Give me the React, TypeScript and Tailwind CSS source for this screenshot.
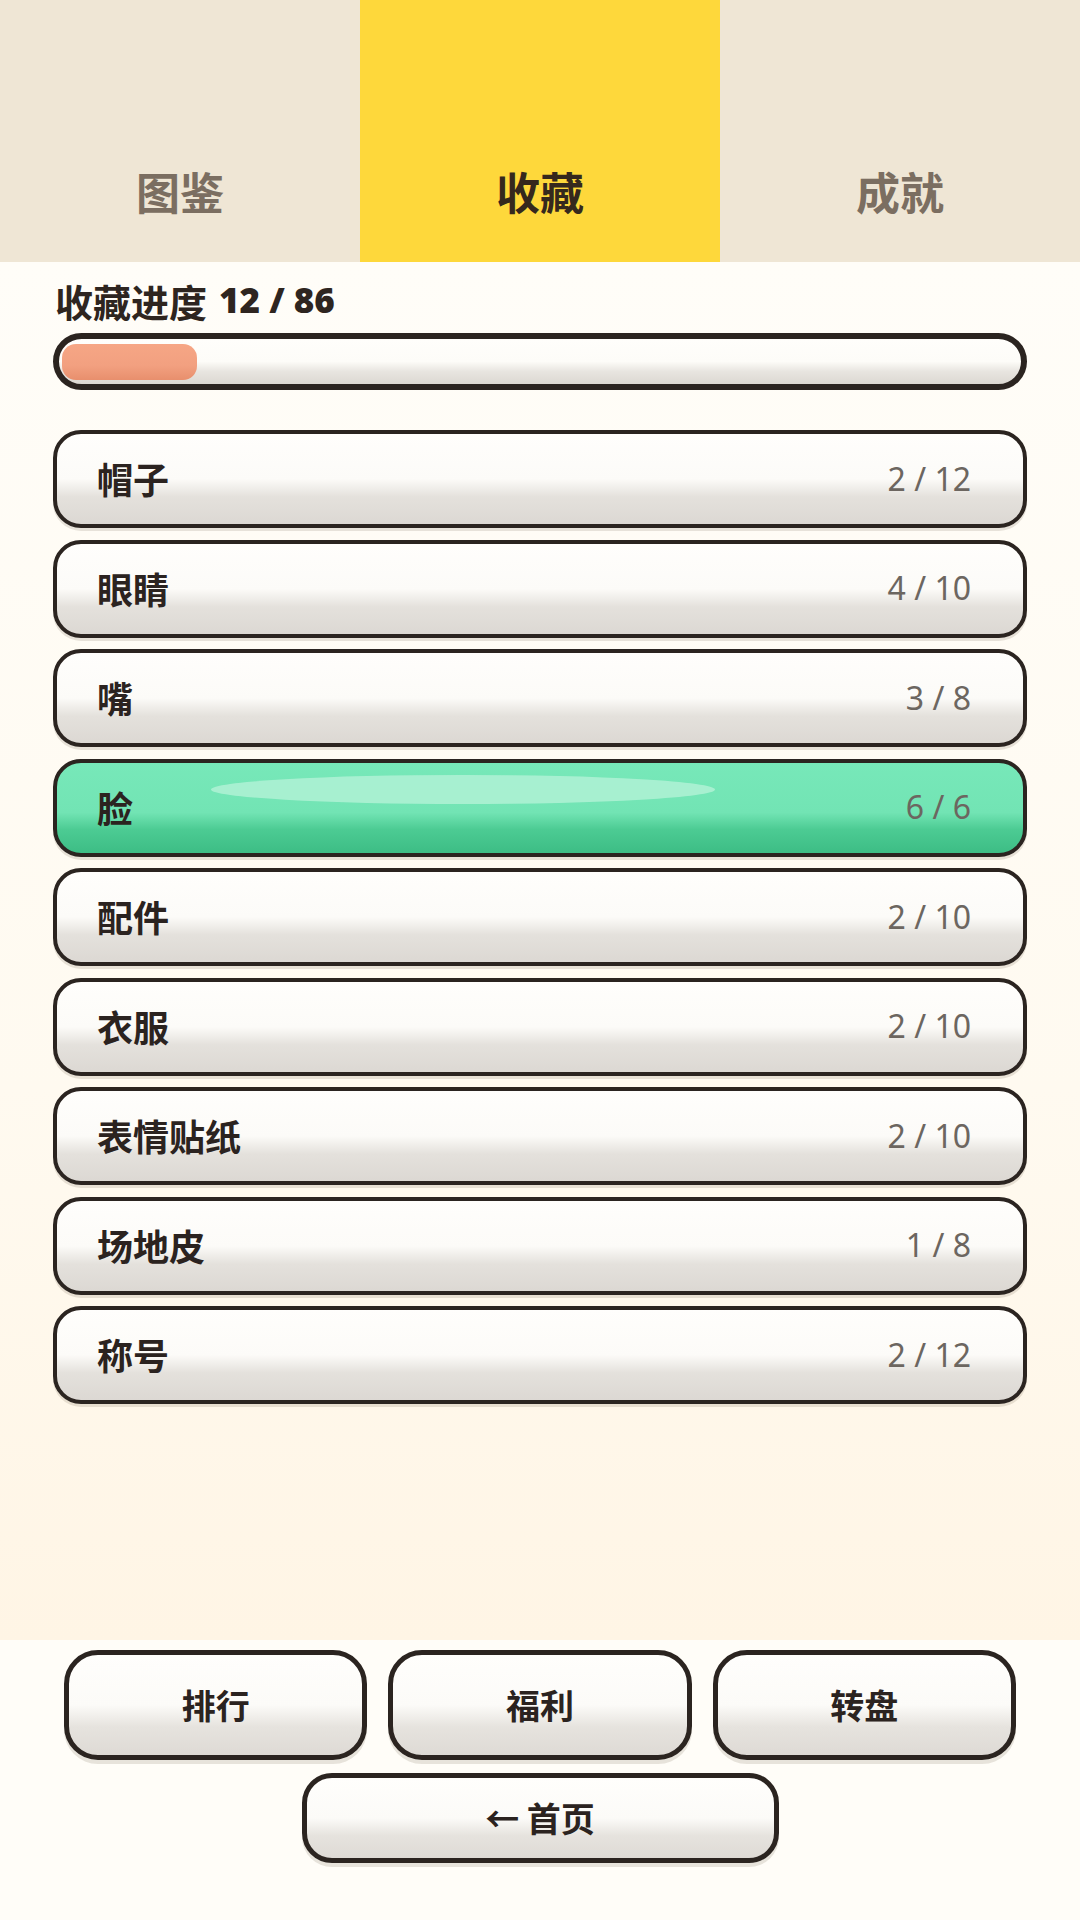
import React from "react";

const cjk = { fontFamily: '"Noto Sans CJK SC", "Noto Sans", sans-serif' };
const num = { fontFamily: '"Noto Sans", "Liberation Sans", sans-serif' };

const rows: { name: string; count: string; done?: boolean }[] = [
  { name: "帽子", count: "2 / 12" },
  { name: "眼睛", count: "4 / 10" },
  { name: "嘴", count: "3 / 8" },
  { name: "脸", count: "6 / 6", done: true },
  { name: "配件", count: "2 / 10" },
  { name: "衣服", count: "2 / 10" },
  { name: "表情贴纸", count: "2 / 10" },
  { name: "场地皮", count: "1 / 8" },
  { name: "称号", count: "2 / 12" },
];

export default function App() {
  return (
    <div className="w-[1080px] h-[1920px] flex flex-col overflow-hidden" style={cjk}>
      {/* Tabs */}
      <div className="grid grid-cols-3 h-[262px] shrink-0">
        <div className="bg-[#efe6d5] flex items-end justify-center pb-[49px]">
          <span className="text-[44px] leading-[44px] font-bold text-[#7b6e61]">图鉴</span>
        </div>
        <div className="bg-[#fed83b] flex items-end justify-center pb-[49px]">
          <span className="text-[44px] leading-[44px] font-bold text-[#35281d]">收藏</span>
        </div>
        <div className="bg-[#efe6d5] flex items-end justify-center pb-[49px]">
          <span className="text-[44px] leading-[44px] font-bold text-[#7b6e61]">成就</span>
        </div>
      </div>

      {/* Content */}
      <div className="flex-1 flex flex-col px-[53px] pt-[16px] bg-[linear-gradient(180deg,#fffdf8_0%,#fffaf0_60%,#fff5e5_100%)]">
        <div className="flex items-center h-[44px] text-[38px] font-bold text-[#2e2520] pl-[2px]">
          <span>收藏进度</span>
          <span className="ml-[12px] font-black text-[35px] tracking-[0px]" style={num}>12 / 86</span>
        </div>

        <div className="mt-[11px] h-[57px] rounded-full border-[6px] border-[#2b2420] bg-[linear-gradient(180deg,#fffefb_0%,#fdfcf8_50%,#e8e5e0_72%,#dcd8d2_100%)] flex items-center px-[3px]">
          <div className="h-[36px] w-[135px] rounded-[14px] bg-[linear-gradient(180deg,#f6a685_0%,#f2a080_60%,#e88f6d_100%)]" />
        </div>

        <div className="mt-[40px] flex flex-col gap-[11.5px]">
          {rows.map((r) => (
            <div
              key={r.name}
              className={
                r.done
                  ? "relative h-[98px] rounded-[28px] border-4 border-[#2b2420] flex items-center justify-between pl-[40px] pr-[52px] shadow-[0_3px_0_rgba(60,40,20,0.12)] bg-[linear-gradient(180deg,#77e8b9_0%,#72e4b4_55%,#4ccb93_74%,#3dbd85_100%)]"
                  : "relative h-[98px] rounded-[28px] border-4 border-[#2b2420] flex items-center justify-between pl-[40px] pr-[52px] shadow-[0_3px_0_rgba(60,40,20,0.12)] bg-[linear-gradient(180deg,#fffefc_0%,#fcfbf8_50%,#e4e1dc_70%,#dcd8d3_100%)]"
              }
            >
              {r.done && (
                <div className="absolute left-[154px] top-[12px] w-[504px] h-[29px] rounded-[50%] bg-[#b4f3d7] opacity-80" />
              )}
              <span className="relative text-[36px] leading-[40px] font-bold text-[#2b2320] -mt-[2px]">{r.name}</span>
              <span className="relative text-[32px] leading-[40px] text-[#6c6660] -mt-[1px]" style={num}>{r.count}</span>
            </div>
          ))}
        </div>
      </div>

      {/* Footer */}
      <div className="h-[280px] shrink-0 bg-[#fffdf8] flex flex-col items-center pt-[10px]">
        <div className="grid grid-cols-3 gap-[21px] w-[952px]">
          {["排行", "福利", "转盘"].map((t) => (
            <div
              key={t}
              className="h-[110px] rounded-[34px] border-[5px] border-[#2b2420] flex items-center justify-center shadow-[0_4px_0_rgba(60,40,20,0.12)] bg-[linear-gradient(180deg,#fffefc_0%,#fcfbf8_50%,#e6e3de_72%,#dedad5_100%)]"
            >
              <span className="text-[34px] leading-[40px] font-bold text-[#2b2320]">{t}</span>
            </div>
          ))}
        </div>
        <div className="mt-[13px] w-[477px] h-[90px] rounded-[30px] border-[5px] border-[#2b2420] flex items-center justify-center shadow-[0_4px_0_rgba(60,40,20,0.12)] bg-[linear-gradient(180deg,#fffefc_0%,#fcfbf8_50%,#e6e3de_72%,#dedad5_100%)]">
          <span className="text-[34px] leading-[40px] font-bold text-[#2b2320]">← 首页</span>
        </div>
      </div>
    </div>
  );
}
